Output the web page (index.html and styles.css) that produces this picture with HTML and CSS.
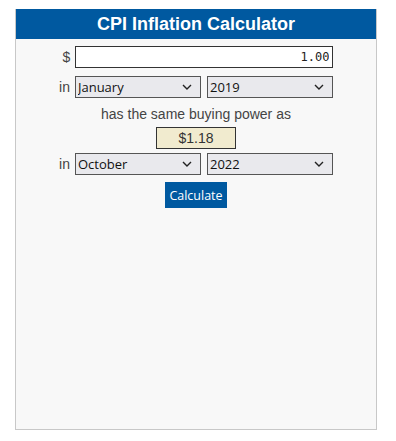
FILE: index.html
```html
<!DOCTYPE html>
<html lang="en">
<head>
    <meta charset="UTF-8">
    <meta name="viewport" content="width=device-width, initial-scale=1.0">
    <title>CPI Inflation Calculator</title>
    <link rel="stylesheet" href="styles.css">
</head>
<body>
    <div class="calc">
        <h1>CPI Inflation Calculator</h1>
        <div class="row amount-row">
            <span class="label">$</span>
            <input class="amount" type="text" value="1.00">
        </div>
        <div class="row">
            <span class="label">in</span>
            <span class="pick">
                <select><option>January</option></select>
                <svg class="chev" width="10" height="6" viewBox="0 0 10 6"><path d="M1 1 L5 5 L9 1" fill="none" stroke="#222" stroke-width="1.4"/></svg>
            </span>
            <span class="pick">
                <select><option>2019</option></select>
                <svg class="chev" width="10" height="6" viewBox="0 0 10 6"><path d="M1 1 L5 5 L9 1" fill="none" stroke="#222" stroke-width="1.4"/></svg>
            </span>
        </div>
        <p class="same">has the same buying power as</p>
        <div class="result">$1.18</div>
        <div class="row">
            <span class="label">in</span>
            <span class="pick">
                <select><option>October</option></select>
                <svg class="chev" width="10" height="6" viewBox="0 0 10 6"><path d="M1 1 L5 5 L9 1" fill="none" stroke="#222" stroke-width="1.4"/></svg>
            </span>
            <span class="pick">
                <select><option>2022</option></select>
                <svg class="chev" width="10" height="6" viewBox="0 0 10 6"><path d="M1 1 L5 5 L9 1" fill="none" stroke="#222" stroke-width="1.4"/></svg>
            </span>
        </div>
        <button class="go">Calculate</button>
    </div>
</body>
</html>
```
FILE: styles.css
```css
body {
    margin: 0;
    padding: 9px 0 0 15px;
    background: #fff;
    font-family: "Liberation Sans", Arial, sans-serif;
    color: #333;
}
.calc {
    width: 360px;
    height: 420px;
    border: 1px solid #c8c8c8;
    border-top: 0;
    background: #f8f8f8;
    display: flex;
    flex-direction: column;
    align-items: center;
}
h1 {
    align-self: stretch;
    margin: 0;
    height: 30px;
    line-height: 30px;
    background: #0059a0;
    color: #fff;
    font-size: 18px;
    text-align: center;
}
.row {
    display: flex;
    align-items: center;
    gap: 6px;
}
.amount-row {
    margin-top: 7px;
    margin-left: 4px;
}
.amount-row + .row {
    margin-top: 8px;
}
.label {
    font-size: 14px;
    color: #444;
    margin-right: -1px;
}
.amount {
    width: 258px;
    height: 22px;
    box-sizing: border-box;
    border: 1px solid #333;
    background: #fff;
    font-family: "DejaVu Sans Mono", monospace;
    font-size: 12px;
    text-align: right;
    padding: 0 3px;
    color: #222;
}
.pick {
    position: relative;
    display: block;
    width: 126px;
    height: 22px;
}
.pick select {
    appearance: none;
    width: 100%;
    height: 100%;
    box-sizing: border-box;
    border: 1px solid #555;
    border-radius: 0;
    background: #e9e9ed;
    font-family: "Open Sans", sans-serif;
    font-size: 13px;
    color: #111;
    padding: 0 2px;
    margin: 0;
}
.chev {
    position: absolute;
    right: 9px;
    top: 8px;
    pointer-events: none;
}
.same {
    margin: 8px 0 0;
    font-size: 14px;
    color: #444;
}
.result {
    width: 80px;
    height: 22px;
    box-sizing: border-box;
    margin-top: 5px;
    border: 1px solid #333;
    background: #f1ebcf;
    font-size: 14px;
    line-height: 20px;
    text-align: center;
    color: #333;
}
.result + .row {
    margin-top: 4px;
}
.go {
    margin-top: 7px;
    height: 26px;
    padding: 0 4px;
    border: 0;
    background: #0059a0;
    color: #fff;
    font-family: "Open Sans", sans-serif;
    font-size: 12.5px;
}
```
